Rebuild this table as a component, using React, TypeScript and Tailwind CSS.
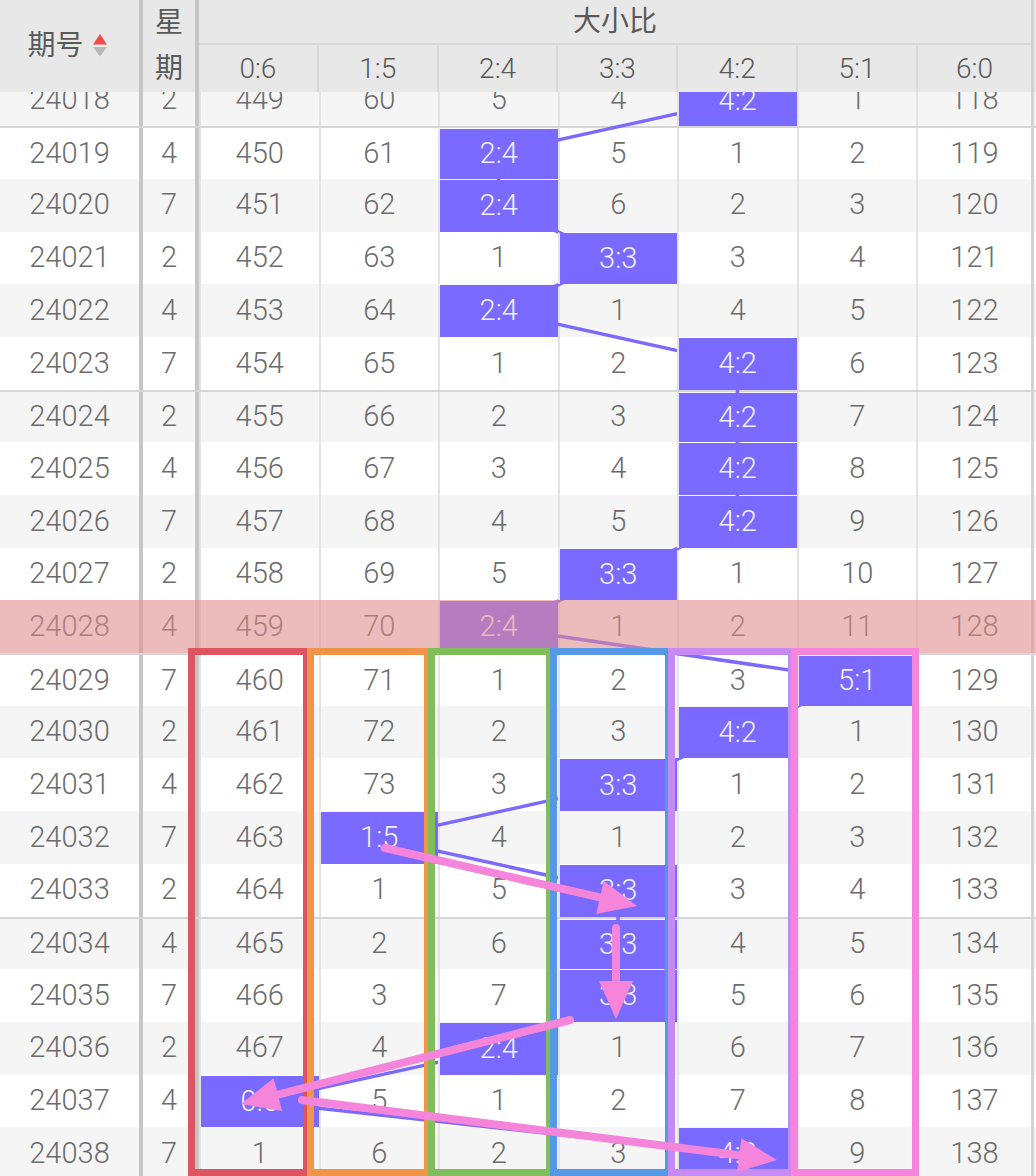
const COLS = ["0:6", "1:5", "2:4", "3:3", "4:2", "5:1", "6:0"];

const ROWS: [number, number, string[]][] = [
  [24018, 2, ["449", "60", "5", "4", "4:2", "1", "118"]],
  [24019, 4, ["450", "61", "2:4", "5", "1", "2", "119"]],
  [24020, 7, ["451", "62", "2:4", "6", "2", "3", "120"]],
  [24021, 2, ["452", "63", "1", "3:3", "3", "4", "121"]],
  [24022, 4, ["453", "64", "2:4", "1", "4", "5", "122"]],
  [24023, 7, ["454", "65", "1", "2", "4:2", "6", "123"]],
  [24024, 2, ["455", "66", "2", "3", "4:2", "7", "124"]],
  [24025, 4, ["456", "67", "3", "4", "4:2", "8", "125"]],
  [24026, 7, ["457", "68", "4", "5", "4:2", "9", "126"]],
  [24027, 2, ["458", "69", "5", "3:3", "1", "10", "127"]],
  [24028, 4, ["459", "70", "2:4", "1", "2", "11", "128"]],
  [24029, 7, ["460", "71", "1", "2", "3", "5:1", "129"]],
  [24030, 2, ["461", "72", "2", "3", "4:2", "1", "130"]],
  [24031, 4, ["462", "73", "3", "3:3", "1", "2", "131"]],
  [24032, 7, ["463", "1:5", "4", "1", "2", "3", "132"]],
  [24033, 2, ["464", "1", "5", "3:3", "3", "4", "133"]],
  [24034, 4, ["465", "2", "6", "3:3", "4", "5", "134"]],
  [24035, 7, ["466", "3", "7", "3:3", "5", "6", "135"]],
  [24036, 2, ["467", "4", "2:4", "1", "6", "7", "136"]],
  [24037, 4, ["0:6", "5", "1", "2", "7", "8", "137"]],
  [24038, 7, ["1", "6", "2", "3", "4:2", "9", "138"]],
];

const ROW_H = 52.7;
const HIGHLIGHT = 24028;

// annotation boxes drawn over the table
const BOXES = [
  { left: 188, width: 122, color: "border-[#dc5560]" },
  { left: 307, width: 124, color: "border-[#f0944a]" },
  { left: 428, width: 125, color: "border-[#80be5c]" },
  { left: 550, width: 122, color: "border-[#5598e6]" },
  { left: 668, width: 127, color: "border-[#c68af2]" },
  { left: 791, width: 128, color: "border-[#f684dc]" },
];

const ARROWS: [number, number, number, number][] = [
  [385, 848, 637, 906],
  [616, 928, 616, 1019],
  [570, 1020, 241, 1104],
  [302, 1100, 777, 1160],
];

function colX(c: number) {
  return 199 + c * 119.5 + 60.5;
}

function Arrow({ s }: { s: [number, number, number, number] }) {
  const [x1, y1, x2, y2] = s;
  const len = Math.hypot(x2 - x1, y2 - y1);
  const ux = (x2 - x1) / len;
  const uy = (y2 - y1) / len;
  const bx = x2 - ux * 38;
  const by = y2 - uy * 38;
  const nx = -uy * 17;
  const ny = ux * 17;
  return (
    <g>
      <line x1={x1} y1={y1} x2={bx} y2={by} stroke="#f585da" strokeWidth={8} strokeLinecap="round" />
      <polygon points={`${x2},${y2} ${bx + nx},${by + ny} ${bx - nx},${by - ny}`} fill="#f585da" />
    </g>
  );
}

function SortIcon() {
  return (
    <svg width="16" height="26" viewBox="0 0 16 26">
      <polygon points="8,1 15,11.5 1,11.5" fill="#f04a4a" />
      <polygon points="1,14 15,14 8,23.5" fill="#b8b8b8" />
    </svg>
  );
}

function Cell({ v, last }: { v: string; last?: boolean }) {
  const hit = v.includes(":");
  return (
    <div
      className={`${last ? "w-[115px]" : "flex-1"} h-full flex items-center justify-center border-l-2 border-l-[#e3e3e3] ${
        hit ? "relative z-[2] bg-[#7a6aff] text-[#f2f0ff] border-t border-t-transparent bg-clip-padding" : ""
      }`}
    >
      {v}
    </div>
  );
}

export default function App() {
  const points = ROWS.map(([, , vals], i) => {
    const c = vals.findIndex((v) => v.includes(":"));
    return `${colX(c)},${i * ROW_H + ROW_H / 2}`;
  }).join(" ");

  return (
    <div className="relative w-[1036px] h-[1176px] overflow-hidden flex flex-col bg-white text-[#6c6c6c] font-light font-['Roboto','Noto_Sans_CJK_SC',sans-serif]">
      {/* header */}
      <div className="flex h-[92px] shrink-0 bg-[#e8e8e8] text-[#595959] text-[28px] relative z-[6]">
        <div className="w-[139px] flex items-center justify-center gap-[8px] pr-[4px]">
          <span className="font-normal">期号</span>
          <SortIcon />
        </div>
        <div className="w-[4px] bg-[#c6c6c6]" />
        <div className="w-[52px] flex flex-col font-normal">
          <div className="h-[45px] flex items-center justify-center">星</div>
          <div className="flex-1 flex items-center justify-center">期</div>
        </div>
        <div className="w-[4px] bg-[#c6c6c6]" />
        <div className="flex-1 flex flex-col">
          <div className="h-[45px] flex items-center justify-center border-b-2 border-[#d9d9d9] font-normal">大小比</div>
          <div className="flex-1 flex">
            {COLS.map((c, i) => (
              <div
                key={c}
                className={`${i === 6 ? "w-[115px]" : "flex-1"} flex items-center justify-center ${
                  i > 0 ? "border-l-2 border-[#d9d9d9]" : ""
                }`}
              >
                {c}
              </div>
            ))}
          </div>
        </div>
        <div className="w-[3px] bg-[#d0d0d0]" />
        <div className="w-[2px]" />
      </div>

      {/* body */}
      <div className="flex-1 overflow-hidden">
        <div className="relative mt-[-18.5px] text-[29px]">
          <svg className="absolute left-0 top-0 z-[1]" width="1036" height={ROWS.length * ROW_H}>
            <polyline points={points} fill="none" stroke="#7a6aff" strokeWidth={3.5} />
          </svg>
          {ROWS.map(([id, week, vals], i) => (
            <div
              key={id}
              className={`relative flex h-[52.7px] ${i % 2 === 0 ? "bg-[#f5f5f5]" : "bg-white"} ${
                (id - 24019) % 5 === 0 ? "border-t-2 border-[#d6d6d6]" : ""
              }`}
            >
              <div className="w-[139px] flex items-center justify-center">{id}</div>
              <div className="w-[4px] bg-[#c6c6c6]" />
              <div className="w-[52px] flex items-center justify-center">{week}</div>
              <div className="w-[4px] bg-[#c6c6c6]" />
              {vals.map((v, j) => (
                <Cell key={j} v={v} last={j === 6} />
              ))}
              <div className="w-[3px] bg-[#d4d4d4]" />
              <div className="w-[2px]" />
              {id === HIGHLIGHT && <div className="absolute inset-0 z-[3] bg-[rgba(227,140,140,0.55)]" />}
            </div>
          ))}
        </div>
      </div>

      {/* hand-drawn annotations */}
      {BOXES.map((b) => (
        <div
          key={b.left}
          className={`absolute z-[4] top-[648px] h-[528px] border-[7px] ${b.color}`}
          style={{ left: b.left, width: b.width }}
        />
      ))}
      <svg className="absolute left-0 top-0 z-[5] pointer-events-none" width="1036" height="1176">
        {ARROWS.map((a, i) => (
          <Arrow key={i} s={a} />
        ))}
      </svg>
    </div>
  );
}
